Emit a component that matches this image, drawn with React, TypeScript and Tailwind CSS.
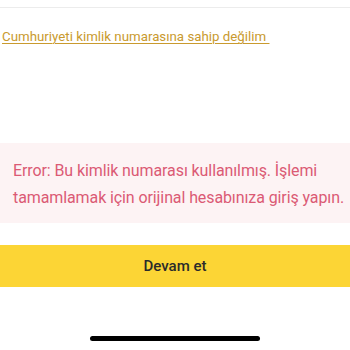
import React from "react";

export default function App() {
  return (
    <div className="w-[350px] h-[350px] bg-white relative overflow-hidden" style={{ fontFamily: 'Roboto, "Liberation Sans", sans-serif' }}>
      <div className="h-[7px]" />
      <div className="h-px bg-[#ececec]" />
      <div className="pl-[2px] pt-[16px] h-[135px]">
        <a className="text-[13.3px] leading-[20px] text-[#c99a2e] underline underline-offset-[2px] decoration-1 whitespace-pre">
          {"Cumhuriyeti kimlik numarasına sahip değilim "}
        </a>
      </div>
      <div className="bg-[#fdf3f4] pl-[13px] pr-[4px] pt-[14px] pb-[12px] text-[16px] leading-[27px] text-[#db5a74] tracking-[-0.1px]">
        Error: Bu kimlik numarası kullanılmış. İşlemi tamamlamak için orijinal hesabınıza giriş yapın.
      </div>
      <div className="h-[22px]" />
      <div className="h-[42px] bg-[#fcd535] flex items-center justify-center text-[15px] font-medium text-[#2b2b2b]">
        Devam et
      </div>
      <div className="flex justify-center pt-[49px]">
        <div className="w-[170px] h-[5px] rounded-full bg-black" />
      </div>
    </div>
  );
}
